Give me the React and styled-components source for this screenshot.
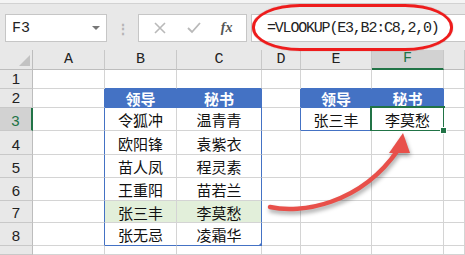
import { Fragment } from "react"
import styled, { createGlobalStyle } from "styled-components"

const GREEN = "#217346"
const BLUE = "#4472c4"
const GRID = "#d4d4d4"

const Global = createGlobalStyle`
  html, body { margin: 0; padding: 0; background: #fff; }
  body { font-family: "Noto Sans CJK SC", "Liberation Sans", sans-serif; }
`

const Page = styled.div`
  position: relative;
  width: 465px;
  height: 255px;
  overflow: hidden;
  background: #fff;
`

// 상단 수식 입력줄
const TopStrip = styled.div`
  height: 3px;
  background: #f4f4f4;
  border-bottom: 1px solid #d2d2d2;
`

const Toolbar = styled.div`
  height: 46px;
  box-sizing: border-box;
  padding: 10px 0 0 5px;
  background: #e8e8e8;
  display: flex;
  align-items: flex-start;
`

const Box = styled.div`
  height: 28px;
  box-sizing: border-box;
  background: #fff;
  border: 1px solid #c6c6c6;
  display: flex;
  align-items: center;
`

const NameBox = styled(Box)`
  width: 102px;
  padding: 0 6px;
  justify-content: space-between;
  font-family: "Liberation Mono", monospace;
  font-size: 15px;
  color: #222;
`

const Caret = styled.span`
  width: 0;
  height: 0;
  border-left: 4px solid transparent;
  border-right: 4px solid transparent;
  border-top: 4px solid #777;
`

const Dots = styled.div`
  width: 31px;
  height: 28px;
  display: flex;
  justify-content: center;
  align-items: center;
  color: #b5b5b5;
  font-size: 14px;
  font-weight: bold;
`

const ButtonBox = styled(Box)`
  width: 109px;
  justify-content: space-around;
  padding: 0 4px;
`

const FxText = styled.span`
  font-family: "Liberation Serif", serif;
  font-style: italic;
  font-size: 14px;
  color: #555;
  font-weight: bold;
`

const FormulaBox = styled(Box)`
  margin-left: 4px;
  flex: 1;
  border-right: none;
  padding-left: 15px;
  font-family: "Liberation Mono", monospace;
  font-size: 15px;
  letter-spacing: -1.2px;
  color: #222;
`

const Ellipse = styled.div`
  position: absolute;
  left: 252px;
  top: 4px;
  width: 201px;
  height: 47px;
  box-sizing: border-box;
  border: 3px solid #ee1c1c;
  border-radius: 48px / 23px;
  box-shadow: 0 0 1px rgba(150, 0, 0, 0.6);
`

// 시트 그리드
const Sheet = styled.div`
  display: grid;
  grid-template-columns: 33px 72px 72px 85px 39px 71px 72px 1fr;
  grid-template-rows: 20px 19px 19px 23px 24px 23px 23px 22px 23px 1fr;
  height: 205px;
`

const Corner = styled.div`
  background: #e8e8e8;
  border-right: 1px solid #bdbdbd;
  border-bottom: 1px solid #bdbdbd;
  position: relative;
  &::after {
    content: "";
    position: absolute;
    right: 2px;
    bottom: 3px;
    border-left: 11px solid transparent;
    border-bottom: 11px solid #c2c2c2;
  }
`

const ColHead = styled.div`
  background: ${p => (p.$active ? "#d2d2d2" : "#e8e8e8")};
  border-right: 1px solid #c8c8c8;
  border-bottom: ${p => (p.$active ? `2px solid ${GREEN}` : "1px solid #bdbdbd")};
  color: ${p => (p.$active ? GREEN : "#222")};
  font-family: "Liberation Mono", monospace;
  font-size: 15px;
  display: flex;
  justify-content: center;
  align-items: flex-end;
  line-height: 18px;
`

const RowHead = styled.div`
  background: ${p => (p.$active ? "#d2d2d2" : "#e8e8e8")};
  border-right: ${p => (p.$active ? `2px solid ${GREEN}` : "1px solid #bdbdbd")};
  border-bottom: 1px solid #c8c8c8;
  color: ${p => (p.$active ? GREEN : "#222")};
  font-family: "Liberation Sans", sans-serif;
  font-size: 15px;
  display: flex;
  justify-content: center;
  align-items: flex-end;
  padding-bottom: 1px;
`

const Cell = styled.div`
  position: relative;
  background: ${p => p.$bg || "#fff"};
  border-right: 1px solid ${p => p.$r || GRID};
  border-bottom: 1px solid ${p => p.$b || GRID};
  color: ${p => (p.$head ? "#fff" : "#111")};
  font-weight: ${p => (p.$head ? "bold" : "normal")};
  font-size: 15px;
  display: flex;
  justify-content: center;
  align-items: center;
  line-height: 1;
  padding-top: 1px;
  white-space: nowrap;
  ${p => p.$selected && `
    &::after {
      content: "";
      position: absolute;
      left: -2px; top: -2px; right: -2px; bottom: -2px;
      border: 2px solid ${GREEN};
    }
    &::before {
      content: "";
      position: absolute;
      right: -4px; bottom: -4px;
      width: 5px; height: 5px;
      background: ${GREEN};
      border: 1px solid #fff;
      z-index: 2;
    }
  `}
  ${p => p.$fill && `
    &::before {
      content: "";
      position: absolute;
      right: -1px; bottom: -1px;
      border-left: 4px solid transparent;
      border-bottom: 4px solid ${BLUE};
    }
  `}
`

const Arrow = styled.svg`
  position: absolute;
  left: 0;
  top: 0;
  pointer-events: none;
  filter: drop-shadow(1px 3px 2px rgba(0, 0, 0, 0.35));
`

const COLS = ["A", "B", "C", "D", "E", "F", "G"]

const values = {
  B2: "领导", C2: "秘书",
  B3: "令狐冲", C3: "温青青",
  B4: "欧阳锋", C4: "袁紫衣",
  B5: "苗人凤", C5: "程灵素",
  B6: "王重阳", C6: "苗若兰",
  B7: "张三丰", C7: "李莫愁",
  B8: "张无忌", C8: "凌霜华",
  E2: "领导", F2: "秘书",
  E3: "张三丰", F3: "李莫愁",
}

// 셀마다 테두리 / 배경 결정
function cellProps(col, row) {
  const p = {}
  const key = col + row
  const inLeft = (col === "B" || col === "C") && row >= 2 && row <= 8
  const inRight = (col === "E" || col === "F") && row >= 2 && row <= 3
  if ((inLeft || inRight) && row === 2) { p.$bg = BLUE; p.$head = true; p.$r = BLUE; p.$b = BLUE }
  if ((col === "A" && row >= 2 && row <= 8) || (col === "D" && row >= 2 && row <= 3)) p.$r = BLUE
  if ((col === "B" || col === "C" || col === "E" || col === "F") && row === 1) p.$b = BLUE
  if (col === "C" && row >= 3 && row <= 8) p.$r = BLUE
  if ((col === "B" || col === "C") && row === 8) p.$b = BLUE
  if (col === "E" && row === 3) p.$b = BLUE
  if ((col === "B" || col === "C") && row === 7) p.$bg = "#e2efda"
  if (key === "F3") p.$selected = true
  if (key === "C8") p.$fill = true
  return p
}

export default function App() {
  const rows = [1, 2, 3, 4, 5, 6, 7, 8, 9]
  return (
    <Page>
      <Global />
      <TopStrip />
      <Toolbar>
        <NameBox>F3<Caret /></NameBox>
        <Dots>⋮</Dots>
        <ButtonBox>
          <svg width="14" height="14" viewBox="0 0 14 14">
            <path d="M2 2L12 12M12 2L2 12" stroke="#b9b9b9" strokeWidth="1.6" />
          </svg>
          <svg width="16" height="14" viewBox="0 0 16 14">
            <path d="M2 7L6 11L14 2" stroke="#b9b9b9" strokeWidth="1.8" fill="none" />
          </svg>
          <FxText>fx</FxText>
        </ButtonBox>
        <FormulaBox>=VLOOKUP(E3,B2:C8,2,0)</FormulaBox>
      </Toolbar>

      <Sheet>
        <Corner />
        {COLS.map(c => <ColHead key={c} $active={c === "F"}>{c === "G" ? "" : c}</ColHead>)}
        {rows.map(r => (
          <Fragment key={r}>
            <RowHead $active={r === 3}>{r < 9 ? r : ""}</RowHead>
            {COLS.map(c => (
              <Cell key={c + r} {...cellProps(c, r)}>{values[c + r]}</Cell>
            ))}
          </Fragment>
        ))}
      </Sheet>

      <Ellipse />
      <Arrow width="465" height="255" viewBox="0 0 465 255">
        <path d="M270 207 C300 214, 360 205, 398 150" stroke="#e8504a" strokeWidth="4.5" fill="none" strokeLinecap="round" />
        <path d="M403 133 L389 153 L410 153 Z" fill="#e8504a" />
      </Arrow>
    </Page>
  )
}
